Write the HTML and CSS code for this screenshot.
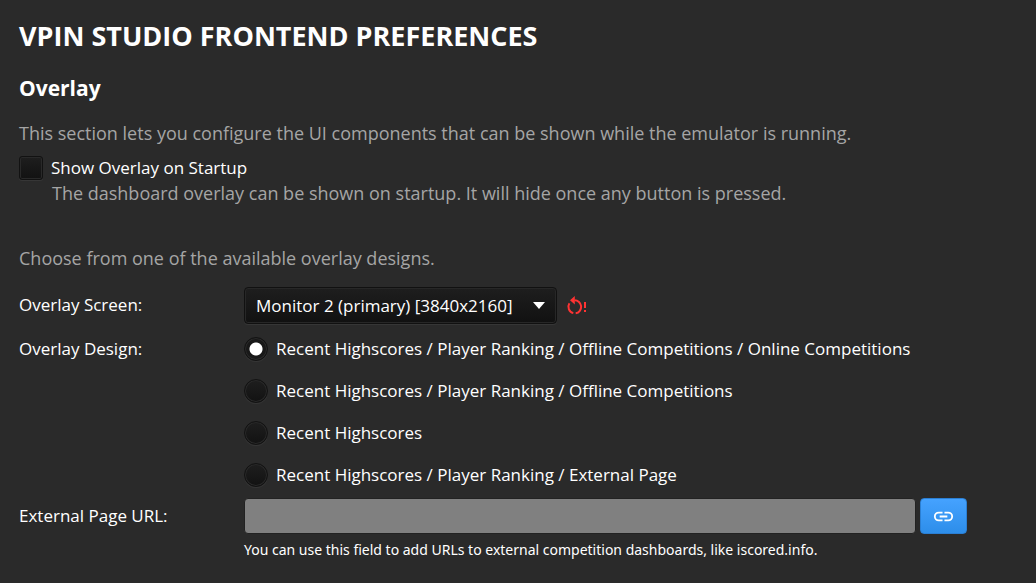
FILE: index.html
```
<!DOCTYPE html>
<html lang="en">
<head>
<meta charset="utf-8">
<title>VPin Studio Frontend Preferences</title>
<link rel="stylesheet" href="styles.css">
</head>
<body>
<main class="page">
  <h1 class="title">VPIN STUDIO FRONTEND PREFERENCES</h1>
  <h2 class="section-title">Overlay</h2>
  <p class="hint">This section lets you configure the UI components that can be shown while the emulator is running.</p>
  <div class="startup">
    <input class="check" type="checkbox" id="startup">
    <label for="startup">Show Overlay on Startup</label>
  </div>
  <p class="hint startup-hint">The dashboard overlay can be shown on startup. It will hide once any button is pressed.</p>
  <p class="hint choose">Choose from one of the available overlay designs.</p>
  <form class="form">
    <label class="row-label" for="screen">Overlay Screen:</label>
    <div class="screen">
      <div class="select-wrap">
        <select class="select" id="screen"><option>Monitor 2 (primary) [3840x2160]</option></select>
        <span class="arrow"></span>
      </div>
      <svg class="restart" viewBox="0 0 22 22" role="img" aria-label="Restart required"><path d="M8.500 5.200A6.600 6.600 0 0 1 9.700 18.300M7.300 18.100A6.600 6.600 0 0 1 3.400 8.200" fill="none" stroke="#ff3333" stroke-width="2"/><path d="M4 5.200 8.800 1v8.600zM18 7h2v6h-2zM18 15h2v2h-2z" fill="#ff3333"/></svg>
    </div>
    <span class="row-label" id="design">Overlay Design:</span>
    <div class="radios" role="radiogroup" aria-labelledby="design">
      <label class="option"><input class="radio" type="radio" name="design" checked>Recent Highscores / Player Ranking / Offline Competitions / Online Competitions</label>
      <label class="option"><input class="radio" type="radio" name="design">Recent Highscores / Player Ranking / Offline Competitions</label>
      <label class="option"><input class="radio" type="radio" name="design">Recent Highscores</label>
      <label class="option"><input class="radio" type="radio" name="design">Recent Highscores / Player Ranking / External Page</label>
    </div>
    <label class="row-label" for="url">External Page URL:</label>
    <div class="url-row">
      <input class="url" type="text" id="url">
      <button class="link-button" type="button" aria-label="Open link"><svg class="link-icon" viewBox="0 0 24 24"><path d="M3.900 12a3.100 3.100 0 0 1 3.100-3.100h4V7H7a5 5 0 0 0 0 10h4v-1.900H7A3.100 3.100 0 0 1 3.900 12M8 13h8v-2H8zm9-6h-4v1.900h4a3.100 3.100 0 0 1 0 6.200h-4V17h4a5 5 0 0 0 0-10"/></svg></button>
    </div>
    <p class="url-hint">You can use this field to add URLs to external competition dashboards, like iscored.info.</p>
  </form>
</main>
</body>
</html>
```
FILE: styles.css
```
* { box-sizing: border-box; }
body { margin: 0; background: #2a2a2a; color: #fff; font: 17px/24px "Open Sans", "Noto Sans", sans-serif; }
.page { padding: 18px 19px 0; }
.title, .section-title, .hint, .url-hint { margin: 0; }
.title { font-size: 27px; line-height: 36px; }
.section-title { margin-top: 18px; font-size: 21px; line-height: 32px; }
.hint { color: #a5a5a5; font-size: 18px; }
.section-title + .hint { margin-top: 17px; }
.startup { display: flex; align-items: center; gap: 8px; margin-top: 11px; }
.check, .radio { appearance: none; flex: none; width: 24px; height: 24px; margin: 0; border: 1px solid #121212; background: linear-gradient(#1e1e1e, #121212); box-shadow: inset 0 0 0 1px #292929, 0 1px #363636; }
.check { border-radius: 3px; }
.radio { border-radius: 50%; }
.radio:checked { background: radial-gradient(circle, #fff 6px, #181818 7px); }
.startup-hint { margin: 1px 0 0 33px; }
.choose { margin-top: 41px; }
.form { display: grid; grid-template-columns: 225px 1fr; margin-top: 17px; }
.row-label { line-height: 36px; }
.screen { display: flex; align-items: center; gap: 9px; }
.select-wrap { position: relative; width: 313px; }
.select { display: block; appearance: none; width: 100%; height: 37px; padding: 0 11px; border: 1px solid #111; border-radius: 4px; background: linear-gradient(#1e1e1e, #111); box-shadow: inset 0 0 0 1px #272727, 0 1px #363636; color: #fff; font: inherit; }
.arrow { position: absolute; top: 15px; right: 12px; border: 6px solid transparent; border-top: 7px solid #fff; border-bottom: 0; pointer-events: none; }
.restart { flex: none; width: 22px; height: 22px; }
#design { margin-top: 7px; }
.radios { display: grid; gap: 18px; margin-top: 13px; }
.option { display: flex; align-items: center; gap: 8px; }
.url-row { display: flex; gap: 4px; margin-top: 11px; width: 100%; max-width: 723px; }
label[for="url"] { margin-top: 11px; }
.url { flex: 1; min-width: 0; height: 36px; border: 1px solid #222; border-radius: 4px; background: #808080; color: #fff; font: inherit; padding: 0 11px; }
.link-button { display: flex; align-items: center; justify-content: center; width: 47px; height: 36px; padding: 0; border: 1px solid #2b7fd3; border-radius: 4px; background: linear-gradient(#45a2ff, #2d8eea); }
.link-icon { width: 23px; height: 23px; fill: #fff; }
.url-hint { grid-column: 2; margin-top: 4px; font-family: "Noto Sans", sans-serif; font-size: 14px; line-height: 24px; }
```
